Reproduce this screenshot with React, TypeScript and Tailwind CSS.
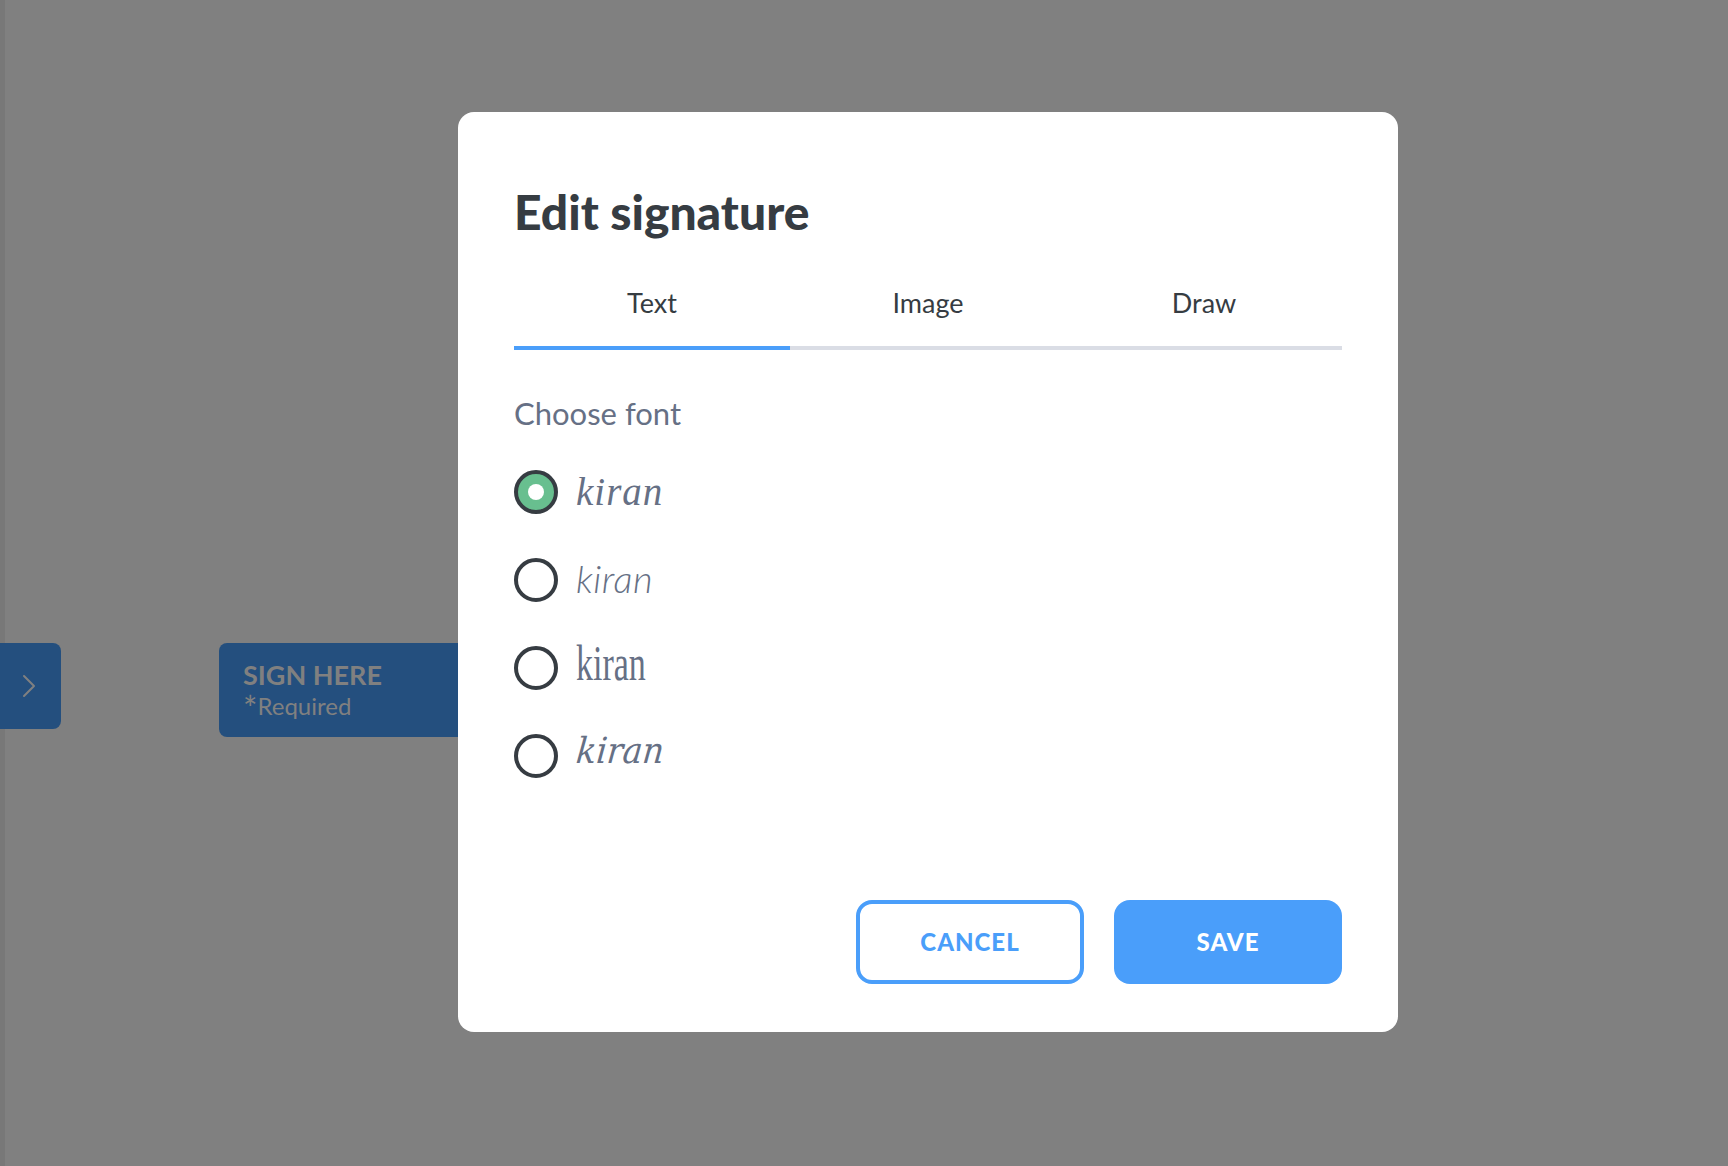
import { ChevronRight } from 'lucide-react';

const fonts = [
  { id: 1, className: "font-['Liberation_Serif'] italic text-[39px] tracking-[1px] h-[44px] leading-[44px]" },
  { id: 2, className: "font-['Lato'] font-light italic text-[38px] tracking-[0.5px] h-[44px] leading-[40px]" },
  { id: 3, className: "font-['Liberation_Serif'] text-[50px] scale-x-[0.68] origin-left h-[44px] leading-[34px]" },
  { id: 4, className: "font-['DejaVu_Serif'] italic text-[36px] scale-x-[0.92] -skew-x-6 origin-left h-[44px] leading-[34px]" },
];

function Radio({ checked }: { checked?: boolean }) {
  return (
    <span
      className={`flex h-[44px] w-[44px] shrink-0 items-center justify-center rounded-full border-[4px] border-[#363c42] ${
        checked ? 'bg-[#68bf8f]' : 'bg-white'
      }`}
    >
      {checked && <span className="h-[16px] w-[16px] rounded-full bg-white" />}
    </span>
  );
}

export default function App() {
  return (
    <div className="relative flex h-[1166px] items-start overflow-hidden bg-[#808080] pt-[643px] font-['Lato',sans-serif]">
      <div className="absolute inset-y-0 left-0 w-[5px] bg-[#787878]" />

      <div className="relative flex h-[86px] w-[61px] items-center justify-end rounded-r-[8px] bg-[#244f7e] pr-[12px]">
        <ChevronRight className="h-[40px] w-[40px] text-[#808080]" strokeWidth={1.2} />
      </div>

      <div className="ml-[158px] h-[94px] w-[300px] rounded-[8px] bg-[#244f7e] pl-[24px] pt-[16px] text-[#808080]">
        <div className="text-[27px] font-bold leading-[32px]">SIGN HERE</div>
        <div className="flex h-[30px] items-start text-[24px] leading-[30px]">
          <span className="text-[34px] leading-[34px]">*</span>
          <span>Required</span>
        </div>
      </div>

      <div className="absolute left-[458px] top-[112px] flex h-[920px] w-[940px] flex-col rounded-[16px] bg-white px-[56px] pb-[48px] pt-[80px]">
        <h1 className="text-[48px] font-black leading-[40px] text-[#363c42]">Edit signature</h1>

        <div className="mt-[54px] grid grid-cols-3 text-center text-[27px] text-[#363c42]">
          <div className="h-[64px] border-b-[4px] border-[#4a9efa] leading-[34px]">Text</div>
          <div className="h-[64px] border-b-[4px] border-[#dadde5] leading-[34px]">Image</div>
          <div className="h-[64px] border-b-[4px] border-[#dadde5] leading-[34px]">Draw</div>
        </div>

        <div className="mt-[43px] text-[31px] leading-[40px] text-[#667085]">Choose font</div>

        <div className="mt-[37px] flex flex-col gap-[44px]">
          {fonts.map((font, i) => (
            <label key={font.id} className="flex items-center gap-[18px]">
              <Radio checked={i === 0} />
              <span className={`block text-[#667085] ${font.className}`}>kiran</span>
            </label>
          ))}
        </div>

        <div className="mt-auto flex justify-end gap-[30px]">
          <button className="h-[84px] w-[228px] rounded-[16px] border-[4px] border-[#4a9efa] bg-white text-[24px] font-black tracking-[1px] text-[#4a9efa]">
            CANCEL
          </button>
          <button className="h-[84px] w-[228px] rounded-[16px] bg-[#4a9efa] text-[24px] font-black tracking-[1px] text-white">
            SAVE
          </button>
        </div>
      </div>
    </div>
  );
}
